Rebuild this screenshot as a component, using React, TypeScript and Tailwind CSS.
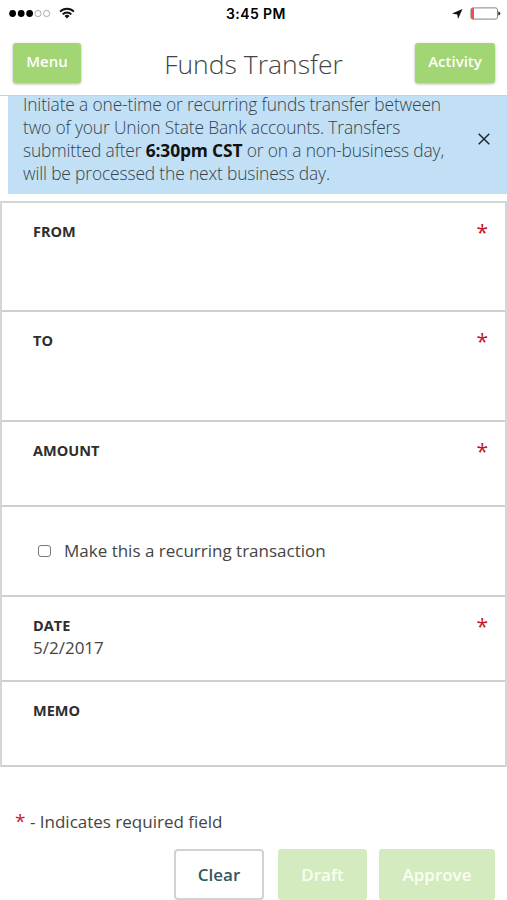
import { useState } from "react";

function StatusBar() {
  return (
    <div className="relative flex h-[27px] items-center justify-between pl-[9px] pr-[6px] font-[Inter,sans-serif]">
      <div className="flex items-center">
        <svg width="43" height="9" viewBox="0 0 43 9">
          <circle cx="3.6" cy="4.5" r="3.4" fill="#000" />
          <circle cx="12.2" cy="4.5" r="3.4" fill="#000" />
          <circle cx="20.6" cy="4.5" r="3.4" fill="#000" />
          <circle cx="29" cy="4.5" r="3.1" fill="none" stroke="#888" strokeWidth="0.7" />
          <circle cx="37.6" cy="4.5" r="3.1" fill="none" stroke="#888" strokeWidth="0.7" />
        </svg>
        <svg className="-mt-px ml-[7px]" width="16" height="12" viewBox="0 0 17 13" fill="none" stroke="#111" strokeWidth="2">
          <path d="M1 5a10.6 10.6 0 0 1 15 0" />
          <path d="M3.8 7.9a6.6 6.6 0 0 1 9.4 0" />
          <path d="M8.5 12.5L5.8 9.8a3.8 3.8 0 0 1 5.4 0z" fill="#111" stroke="none" />
        </svg>
      </div>
      <span className="absolute left-[226px] top-[5px] text-[14px] leading-[18px] font-semibold tracking-[0.4px] whitespace-nowrap text-black">
        3:45 PM
      </span>
      <div className="flex items-center gap-[7px]">
        <svg width="11" height="10" viewBox="0 0 11 10">
          <path d="M10.5 0L6 10L5.3 5.5L0 4.4z" fill="#111" />
        </svg>
        <svg width="31" height="13" viewBox="0 0 31 13">
          <rect x="0.9" y="0.9" width="26.6" height="11.2" rx="2" fill="#fff" stroke="#777" strokeWidth="0.9" />
          <path d="M4 1v11H2.5A1.5 1.5 0 0 1 1 10.5V2.5A1.5 1.5 0 0 1 2.5 1z" fill="#ee5148" />
          <path d="M28.3 4.5q2 0.6 2 2t-2 2z" fill="#222" />
        </svg>
      </div>
    </div>
  );
}

function Header() {
  return (
    <header className="flex h-[69px] items-start justify-between border-b border-[#cfcfcf] pl-[13px] pr-3 pt-4">
      <button className="h-10 w-[68px] rounded-[3px] bg-[#a2d573] pb-[3px] text-[15px] font-semibold text-white shadow-[0_1px_3px_rgba(0,0,0,0.3)]">
        Menu
      </button>
      <h1 className="ml-[11px] text-[26.5px] leading-[43px] font-light whitespace-nowrap text-[#444]">
        Funds Transfer
      </h1>
      <button className="h-10 w-20 rounded-[3px] bg-[#a2d573] pb-[3px] text-[15px] font-semibold text-white shadow-[0_1px_3px_rgba(0,0,0,0.3)]">
        Activity
      </button>
    </header>
  );
}

function Notice({ onClose }: { onClose: () => void }) {
  return (
    <div className="ml-2 flex h-[98px] items-start justify-between bg-[#c2e0f5] pl-[15px] pr-[17px]">
      <p className="-mt-[3.5px] text-[17.4px] leading-[23.2px] font-light tracking-[-0.15px] whitespace-nowrap text-[#34434e]">
        Initiate a one-time or recurring funds transfer between
        <br />
        two of your Union State Bank accounts. Transfers
        <br />
        submitted after <b className="font-bold text-[#111]">6:30pm CST</b> or on a non-business day,
        <br />
        will be processed the next business day.
      </p>
      <button className="mt-[37px]" aria-label="Close" onClick={onClose}>
        <svg width="12" height="12" viewBox="0 0 12 12" stroke="#1c2a33" strokeWidth="1.5">
          <path d="M0.7 0.7L11.3 11.3M11.3 0.7L0.7 11.3" />
        </svg>
      </button>
    </div>
  );
}

function Field({
  label,
  height,
  value,
  required,
}: {
  label: string;
  height: string;
  value?: string;
  required?: boolean;
}) {
  return (
    <div className={`${height} flex justify-between border-b-2 border-[#cfcfcf] pl-[31px] pr-[17px] pt-[19px]`}>
      <div>
        <div className="text-[14.5px] leading-[20px] font-bold text-[#2e2e2e]">{label}</div>
        {value && <div className="text-[17px] leading-[24px] text-[#444]">{value}</div>}
      </div>
      {required && <span className="-mt-[5px] text-[21px] leading-[30px] font-medium text-[#c4161c]">*</span>}
    </div>
  );
}

function App() {
  const [showNotice, setShowNotice] = useState(true);
  const [recurring, setRecurring] = useState(false);

  return (
    <div className="h-[900px] w-[507px] overflow-hidden bg-white font-['Open_Sans',sans-serif]">
      <StatusBar />
      <Header />
      {showNotice && <Notice onClose={() => setShowNotice(false)} />}

      <div className="mt-[7px] border-x-2 border-t-2 border-[#d6d6d6]">
        <Field label="FROM" height="h-[109px]" required />
        <Field label="TO" height="h-[110px]" required />
        <Field label="AMOUNT" height="h-[85px]" required />
        <label className="flex h-[90px] items-center border-b-2 border-[#cfcfcf] pl-[36px]">
          <input
            type="checkbox"
            checked={recurring}
            onChange={() => setRecurring(!recurring)}
            className="h-[12px] w-[13px] appearance-none rounded-[3px] border border-[#777] bg-white checked:bg-[#a2d573]"
          />
          <span className="-mt-0.5 ml-[13px] text-[17px] leading-[23px] text-[#444]">Make this a recurring transaction</span>
        </label>
        <Field label="DATE" height="h-[85px]" value="5/2/2017" required />
        <Field label="MEMO" height="h-[85px]" />
      </div>

      <p className="mt-[43px] ml-[15px] h-[23px] text-[17px] leading-[23px] text-[#444]">
        <span className="text-[19px] font-medium text-[#d0161c]">*</span> - Indicates required field
      </p>

      <div className="mt-4 flex justify-end pr-3 text-[17px] font-semibold">
        <button className="h-[51px] w-[90px] rounded-[4px] border-2 border-[#d2d2d2] bg-white text-[#32595f]">
          Clear
        </button>
        <button className="ml-[14px] h-[51px] w-[89px] rounded-[3px] bg-[#d4ebbf] text-[#f8fff2]">Draft</button>
        <button className="ml-3 h-[51px] w-[116px] rounded-[3px] bg-[#d4ebbf] text-[#f8fff2]">Approve</button>
      </div>
    </div>
  );
}

export default App;
